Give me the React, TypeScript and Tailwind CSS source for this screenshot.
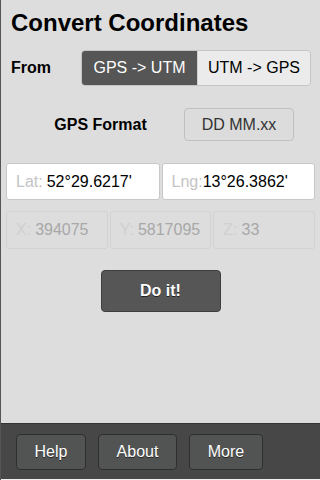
import React, { useState } from 'react';

const App: React.FC = () => {
  const [mode, setMode] = useState<'gps' | 'utm'>('gps');

  return (
    <div className="w-[320px] h-[480px] flex flex-col bg-[#dddddd] border-l border-[#555555] font-['Liberation_Sans',Arial,sans-serif] overflow-hidden">
      <div className="flex-1 flex flex-col">
        <h1 className="pl-[10px] pt-[9px] text-[24px] leading-[28px] font-bold text-black">Convert Coordinates</h1>

        <div className="flex items-center mt-[13px] pl-[10px]">
          <span className="w-[70px] text-[16px] font-bold text-black">From</span>
          <div className="flex h-[36px] rounded-[4px] border border-[#c4c4c4] overflow-hidden">
            <button
              onClick={() => setMode('gps')}
              className={`w-[115px] text-[16px] ${mode === 'gps' ? 'bg-[#555655] text-white' : 'bg-[#ebebeb] text-black'}`}
            >
              GPS -&gt; UTM
            </button>
            <button
              onClick={() => setMode('utm')}
              className={`w-[113px] text-[16px] border-l border-[#cfcfcf] ${mode === 'utm' ? 'bg-[#555655] text-white' : 'bg-[#ebebeb] text-black'}`}
            >
              UTM -&gt; GPS
            </button>
          </div>
        </div>

        <div className="flex items-center mt-[22px]">
          <span className="w-[199px] text-center text-[16px] font-bold text-black">GPS Format</span>
          <button className="w-[110px] h-[33px] -ml-[16px] rounded-[4px] border border-[#c0c0c0] bg-[#dcdcdc] text-[16px] text-[#333]">DD MM.xx</button>
        </div>

        <div className="flex gap-[2px] mt-[22px] px-[5px]">
          <div className="flex-1 h-[37px] flex items-center bg-white border border-[#c8c8c8] rounded-[3px] pl-[9px] text-[16px]">
            <span className="text-[#c4c4c4]">Lat:</span>
            <span className="text-black ml-[4px]">52°29.6217'</span>
          </div>
          <div className="flex-1 h-[37px] flex items-center bg-white border border-[#c8c8c8] rounded-[3px] pl-[9px] text-[16px]">
            <span className="text-[#c4c4c4]">Lng:</span>
            <span className="text-black">13°26.3862'</span>
          </div>
        </div>

        <div className="flex gap-[2px] mt-[11px] px-[5px]">
          {[['X:', '394075'], ['Y:', '5817095'], ['Z:', '33']].map(([k, v]) => (
            <div key={k} className="flex-1 h-[38px] flex items-center border border-[#d2d2d2] rounded-[3px] pl-[9px] text-[16px]">
              <span className="text-[#d0d0d0]">{k}</span>
              <span className="text-[#a8a8a8] ml-[4px]">{v}</span>
            </div>
          ))}
        </div>

        <div className="flex justify-center mt-[21px]">
          <button className="w-[120px] h-[42px] rounded-[4px] bg-[#555655] border border-[#3e3e3e] text-white text-[16px] font-bold [text-shadow:0_1px_0_#222]">Do it!</button>
        </div>
      </div>

      <div className="h-[57px] bg-[#474747] border-t border-[#333] border-b border-b-[#f0f0f0] flex items-center gap-[12px] pl-[15px]">
        {[['Help', 'w-[70px]'], ['About', 'w-[79px]'], ['More', 'w-[74px]']].map(([t, w]) => (
          <button key={t} className={`${w} h-[36px] rounded-[4px] bg-[#525453] border border-[#2f2f2f] text-white text-[16px] [text-shadow:0_1px_0_#222]`}>{t}</button>
        ))}
      </div>
    </div>
  );
};

export default App;
